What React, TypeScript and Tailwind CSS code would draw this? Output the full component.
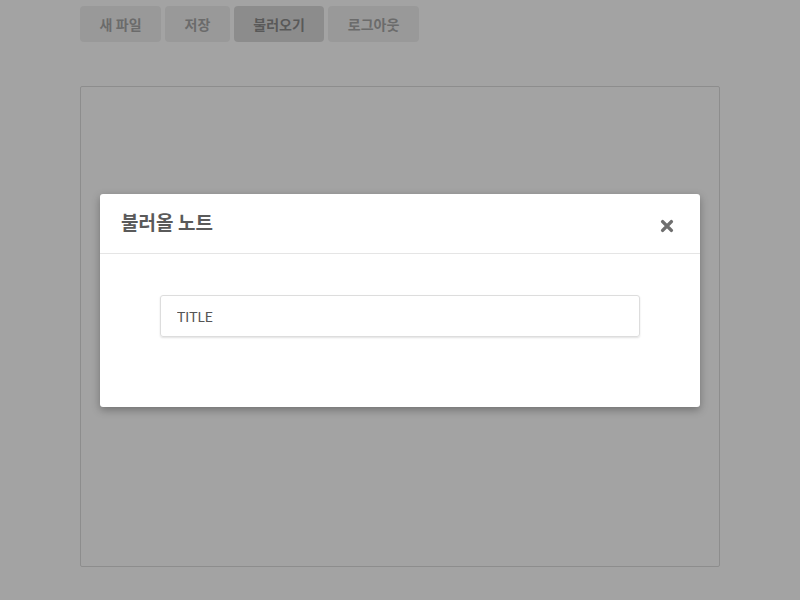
import React from 'react';

const font = { fontFamily: 'Lato, "Noto Sans CJK KR", sans-serif' };

const menu = ['새 파일', '저장', '불러오기', '로그아웃'];

export default function App() {
    return (
        <div className="relative w-[800px] h-[600px] bg-white overflow-hidden" style={font}>
            <div className="w-[640px] mx-auto pt-[6px]">
                <div className="flex gap-[4px]">
                    {menu.map((m, i) => (
                        <button
                            key={m}
                            className={`h-[36px] px-[19.5px] rounded-[4px] text-[14px] font-bold ${i === 2 ? 'bg-[#dcdcdc] text-[#8c8c8c]' : 'bg-[#f0f0f0] text-[#a8a8a8]'}`}
                        >
                            {m}
                        </button>
                    ))}
                </div>
                <div className="mt-[44px] h-[481px] border border-[#ddd] rounded-[2px]" />
            </div>

            <div className="absolute inset-0 bg-black/[0.36] flex justify-center">
                <div className="mt-[194px] w-[600px] h-[213px] bg-white rounded-[3px] shadow-[0_3px_9px_rgba(0,0,0,0.3)] self-start">
                    <div className="h-[60px] border-b border-[#e5e5e5] flex items-center justify-between pl-[21px] pr-[26px]">
                        <h2 className="text-[19px] font-bold text-[#5a5a5a]">불러올 노트</h2>
                        <svg viewBox="0 0 16 16" className="w-[14px] h-[14px] mt-[4px]">
                            <path d="M3 3 L13 13 M13 3 L3 13" stroke="#6f6f6f" strokeWidth="4" strokeLinecap="round" />
                        </svg>
                    </div>
                    <div className="pt-[41px] flex justify-center">
                        <input
                            defaultValue="TITLE"
                            className="w-[480px] h-[42px] px-[16px] border border-[#ddd] rounded-[3px] shadow-[0_1px_2px_rgba(0,0,0,0.12)] text-[14px] text-[#555] outline-none"
                            style={font}
                        />
                    </div>
                </div>
            </div>
        </div>
    );
}
